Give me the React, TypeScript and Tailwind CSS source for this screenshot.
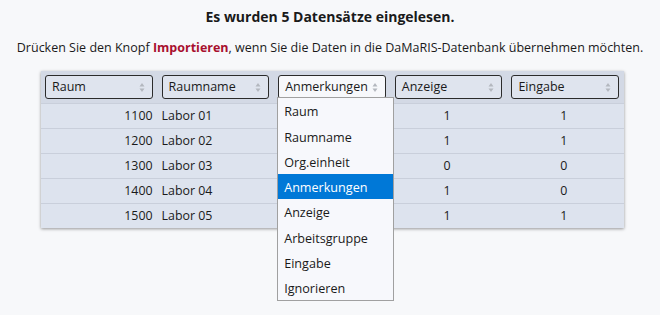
import React from "react";

const cols = ["Raum", "Raumname", "Anmerkungen", "Anzeige", "Eingabe"];
const rows = [
  ["1100", "Labor 01", "", "1", "1"],
  ["1200", "Labor 02", "", "1", "1"],
  ["1300", "Labor 03", "", "0", "0"],
  ["1400", "Labor 04", "", "1", "0"],
  ["1500", "Labor 05", "", "1", "1"],
];
const options = ["Raum", "Raumname", "Org.einheit", "Anmerkungen", "Anzeige", "Arbeitsgruppe", "Eingabe", "Ignorieren"];

function Arrows() {
  return (
    <svg width="6" height="11" viewBox="0 0 6 11" className="shrink-0">
      <path d="M3 1 L5.5 4.5 L0.5 4.5 Z" fill="#b3b7be" />
      <path d="M3 10 L5.5 6.5 L0.5 6.5 Z" fill="#b3b7be" />
    </svg>
  );
}

function Select({ label, active }: { label: string; active?: boolean }) {
  return (
    <div
      className={
        "flex h-[24px] items-center justify-between rounded-[3px] border border-[#2b2b2b] pl-[6px] pr-[7px] text-[12.5px] text-[#1a1a1a] " +
        (active ? "bg-[#f7f8fb]" : "bg-[#dfe4ee]")
      }
    >
      <span>{label}</span>
      <Arrows />
    </div>
  );
}

export default function App() {
  return (
    <div
      className="min-h-[315px] w-[660px] bg-[#f7f8fa] text-[#1a1a1a]"
      style={{ fontFamily: '"Open Sans", "Noto Sans", sans-serif' }}
    >
      <div className="pt-[7px] text-center text-[14px] font-bold leading-[20px]">
        Es wurden 5 Datensätze eingelesen.
      </div>
      <div className="mt-[12px] text-center text-[12.5px] leading-[18px]">
        Drücken Sie den Knopf <span className="font-bold text-[#a8102e]">Importieren</span>, wenn Sie die Daten in die DaMaRIS-Datenbank übernehmen möchten.
      </div>
      <div className="mt-[14px] pl-[41px]">
        <div className="w-[583px] bg-[#dde3ee] shadow-[0_1px_3px_rgba(0,0,0,0.4)]">
          <div className="grid grid-cols-5 bg-[#d3d9e5] pb-[4px] pt-[4px]">
            {cols.map((c, i) => (
              <div key={c} className="relative pl-[4px] pr-[5px]">
                <Select label={c} active={i === 2} />
                {i === 2 && (
                  <div className="absolute left-[3px] top-[22px] z-10 w-[117px] border border-[#a0a0a0] bg-[#f7f8fc]">
                    {options.map((o) => (
                      <div
                        key={o}
                        className={
                          "flex h-[25.3px] items-center pl-[6px] pt-[4px] text-[12.6px] " +
                          (o === "Anmerkungen" ? "bg-[#0078d7] text-white" : "text-[#1a1a1a]")
                        }
                      >
                        {o}
                      </div>
                    ))}
                  </div>
                )}
              </div>
            ))}
          </div>
          {rows.map((r, ri) => (
            <div key={ri} className="grid h-[25px] grid-cols-5 border-t border-[#c9cfdb] text-[12.4px]">
              <div className="flex items-center justify-end pr-[5px]">{r[0]}</div>
              <div className="flex items-center pl-[4px]">{r[1]}</div>
              <div className="flex items-center justify-center">{r[2]}</div>
              <div className="flex items-center justify-center pr-[4px]">{r[3]}</div>
              <div className="flex items-center justify-center pr-[4px]">{r[4]}</div>
            </div>
          ))}
        </div>
      </div>
    </div>
  );
}
